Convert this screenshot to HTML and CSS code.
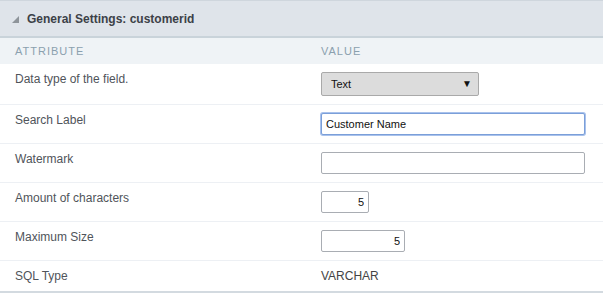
FILE: index.html
```html
<!DOCTYPE html>
<html lang="en">
  <head>
    <meta charset="UTF-8" />
    <title>General Settings</title>
    <link rel="stylesheet" href="styles.css">
  </head>
  <body>
    <div class="panel">
      <div class="panel-head">
        <span class="toggle"></span>
        <span class="panel-title">General Settings: customerid</span>
      </div>

      <div class="row cols">
        <div class="cell attr">Attribute</div>
        <div class="cell value">Value</div>
      </div>

      <div class="row">
        <div class="cell attr">Data type of the field.</div>
        <div class="cell value">
          <div class="fake-select">
            <span>Text</span>
            <span class="arrow">&#9660;</span>
          </div>
        </div>
      </div>

      <div class="row">
        <div class="cell attr">Search Label</div>
        <div class="cell value">
          <input type="text" class="field wide focused" value="Customer Name" />
        </div>
      </div>

      <div class="row">
        <div class="cell attr">Watermark</div>
        <div class="cell value">
          <input type="text" class="field wide" value="" />
        </div>
      </div>

      <div class="row">
        <div class="cell attr">Amount of characters</div>
        <div class="cell value">
          <input type="text" class="field num small" value="5" />
        </div>
      </div>

      <div class="row">
        <div class="cell attr">Maximum Size</div>
        <div class="cell value">
          <input type="text" class="field num medium" value="5" />
        </div>
      </div>

      <div class="row last">
        <div class="cell attr">SQL Type</div>
        <div class="cell value plain">VARCHAR</div>
      </div>
    </div>
  </body>
</html>
```

FILE: styles.css
```css
body {
  margin: 0;
  padding: 0;
  background: #fff;
  font-family: "Liberation Sans", Arial, sans-serif;
  font-size: 12px;
  color: #50545a;
}
.panel {
  width: 603px;
  border-top: 1px solid #cfd6dd;
  border-bottom: 2px solid #d3dae0;
}
.panel-head {
  display: flex;
  align-items: center;
  height: 35px;
  padding-left: 12px;
  background: #dfe4ea;
  border-bottom: 2px solid #c9d3da;
}
.toggle {
  width: 0;
  height: 0;
  border-left: 7px solid transparent;
  border-bottom: 7px solid #8e949a;
  margin-right: 8px;
  margin-top: 1px;
}
.panel-title {
  font-weight: bold;
  color: #3c4147;
  font-size: 12px;
}
.row {
  display: flex;
  border-bottom: 1px solid #edf0f4;
}
.row.last {
  border-bottom: none;
}
.cell {
  padding: 8px 15px;
  line-height: 14px;
}
.attr {
  width: 276px;
}
.value {
  flex: 1;
}
.cols {
  background: #eff3f6;
  border-bottom: none;
}
.cols .cell {
  padding: 6px 15px;
  text-transform: uppercase;
  letter-spacing: 1px;
  font-size: 11px;
  color: #8ba0ae;
}
.fake-select {
  display: flex;
  justify-content: space-between;
  align-items: center;
  box-sizing: border-box;
  width: 158px;
  height: 24px;
  padding: 0 6px 0 9px;
  background: #dcdcdc;
  border: 1px solid #a9a9a9;
  border-radius: 2px;
  font-size: 11px;
  color: #111;
}
.arrow {
  font-size: 10px;
}
.field {
  display: block;
  box-sizing: border-box;
  height: 22px;
  margin: 0;
  padding: 0 4px;
  border: 1px solid #a9adb3;
  border-radius: 2px;
  font-family: "Liberation Sans", Arial, sans-serif;
  font-size: 11px;
  color: #111;
  outline: none;
}
.focused {
  border-color: #7b9fd9;
  box-shadow: 0 0 0 1px #a9c2ec;
}
.wide {
  width: 264px;
}
.num {
  text-align: right;
}
.small {
  width: 48px;
}
.medium {
  width: 84px;
}
.plain {
  color: #444;
}
```
